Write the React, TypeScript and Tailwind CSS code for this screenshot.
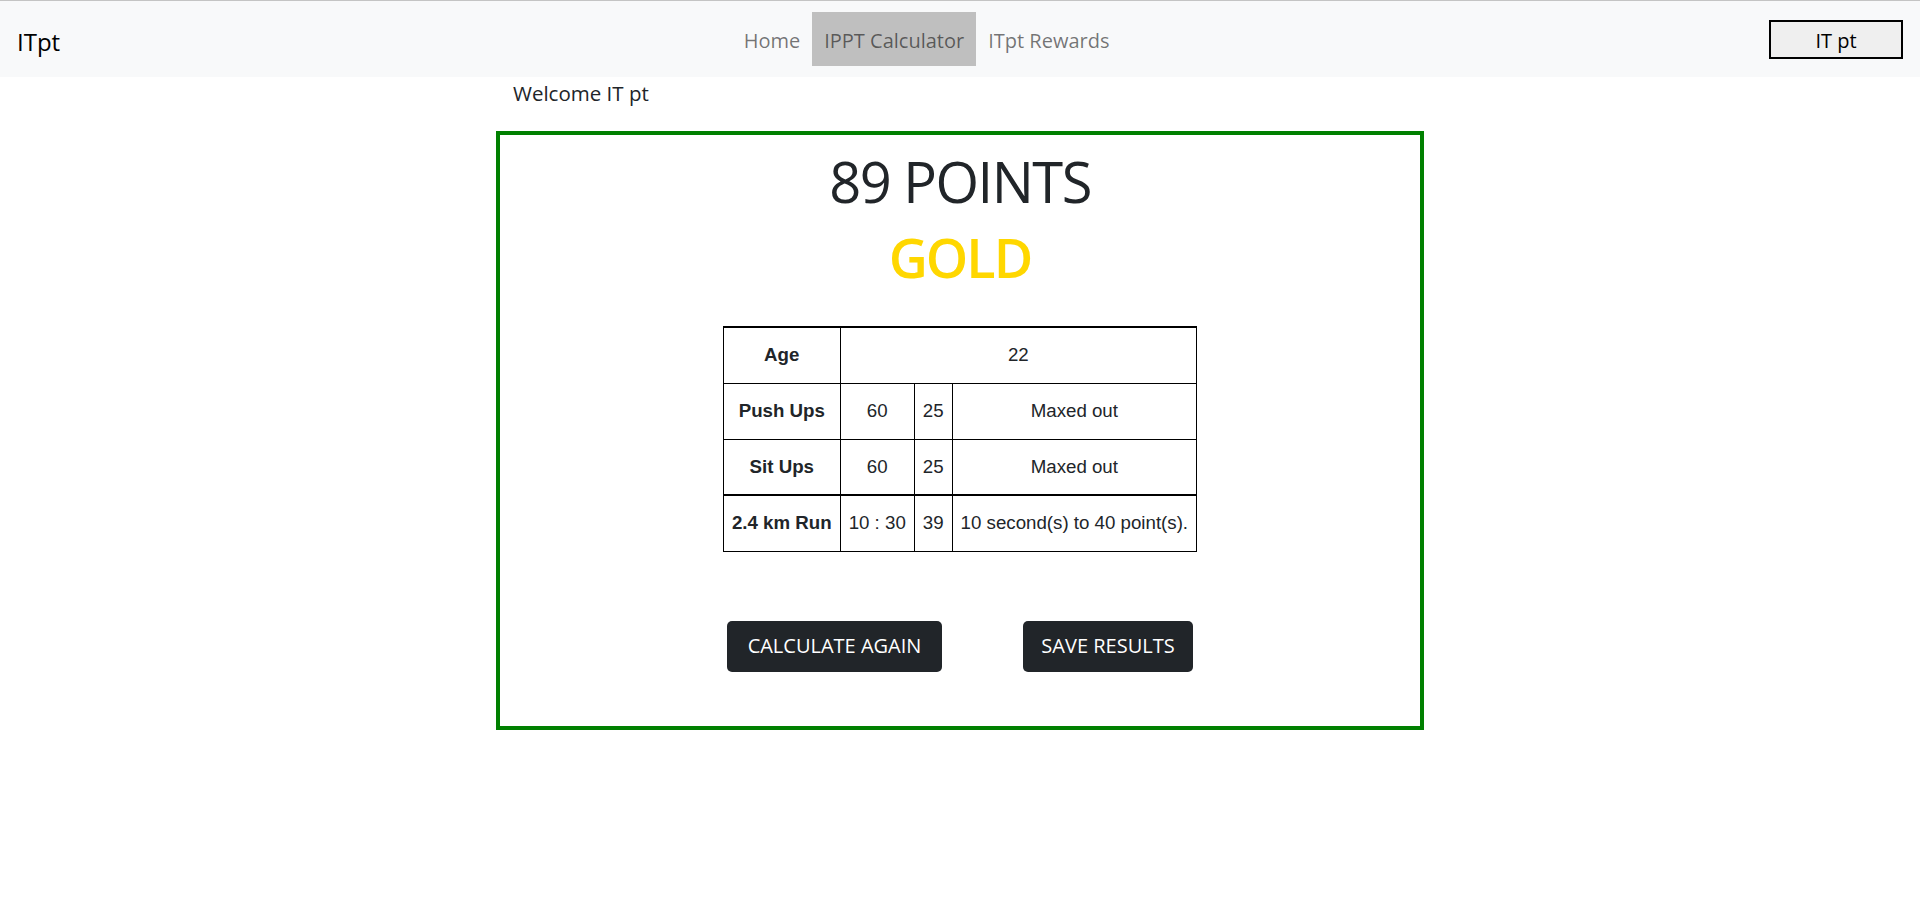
import React from 'react';

type Row = {
    label: string;
    value: string;
    points: string;
    note: string;
};

const rows: Row[] = [
    { label: 'Push Ups', value: '60', points: '25', note: 'Maxed out' },
    { label: 'Sit Ups', value: '60', points: '25', note: 'Maxed out' },
];

const run: Row = { label: '2.4 km Run', value: '10 : 30', points: '39', note: '10 second(s) to 40 point(s).' };

const cell = 'border border-black px-2 h-[56px] text-center align-middle';

export default function App() {
    return (
        <div className="min-h-screen bg-white text-[#212529] font-['Open_Sans',sans-serif]">
            {/* navbar */}
            <nav className="flex items-center h-[77px] border-t border-[#c4c4c4] bg-[#f8f9fa] px-[17px]">
                <a className="text-[24px] leading-[36px] pt-[5px] mr-4 text-black">ITpt</a>
                <ul className="flex mx-auto pl-[8px] text-[20px] leading-[30px] text-black/55">
                    <li className="px-[12px] pt-[14px] pb-[10px]">Home</li>
                    <li className="px-[12px] pt-[14px] pb-[10px] bg-[#bfbfbf]">IPPT Calculator</li>
                    <li className="px-[12px] pt-[14px] pb-[10px]">ITpt Rewards</li>
                </ul>
                <button className="w-[134px] h-[39px] border-2 border-black bg-[#efefef] text-[20px] leading-[30px] pt-[3px] text-black">
                    IT pt
                </button>
            </nav>

            <div className="w-[928px] mx-auto">
                <p className="pl-[17px] pt-px text-[20.5px] leading-[30px]">Welcome IT pt</p>

                {/* results card */}
                <div className="mt-[23px] border-4 border-[#008000] pt-[18px] pb-[54px] flex flex-col items-center">
                    <h1 className="text-[56px] leading-none tracking-[-1.5px] text-[#212529]">89 POINTS</h1>
                    <h2 className="mt-[21px] text-[54px] leading-none font-semibold tracking-[-2px] text-[#ffd700]">GOLD</h2>

                    <table className="mt-[42px] border-collapse font-['Liberation_Sans',Arial,sans-serif] text-[18.7px] text-[#212529]">
                        <tbody>
                            <tr>
                                <th className={`${cell} border-t-2 font-bold`}>Age</th>
                                <td colSpan={3} className={`${cell} border-t-2`}>22</td>
                            </tr>
                            {rows.map((r) => (
                                <tr key={r.label}>
                                    <th className={`${cell} font-bold`}>{r.label}</th>
                                    <td className={cell}>{r.value}</td>
                                    <td className={cell}>{r.points}</td>
                                    <td className={cell}>{r.note}</td>
                                </tr>
                            ))}
                        </tbody>
                        <tbody>
                            <tr>
                                <th className={`${cell} border-t-2 font-bold`}>{run.label}</th>
                                <td className={`${cell} border-t-2`}>{run.value}</td>
                                <td className={`${cell} border-t-2`}>{run.points}</td>
                                <td className={`${cell} border-t-2`}>{run.note}</td>
                            </tr>
                        </tbody>
                    </table>

                    <div className="mt-[69px] w-[470px] px-[2px] flex justify-between">
                        <button className="w-[215px] h-[51px] rounded-[5px] bg-[#212529] text-white text-[20px] leading-[30px]">
                            CALCULATE AGAIN
                        </button>
                        <button className="w-[170px] h-[51px] rounded-[5px] bg-[#212529] text-white text-[20px] leading-[30px]">
                            SAVE RESULTS
                        </button>
                    </div>
                </div>
            </div>
        </div>
    );
}
